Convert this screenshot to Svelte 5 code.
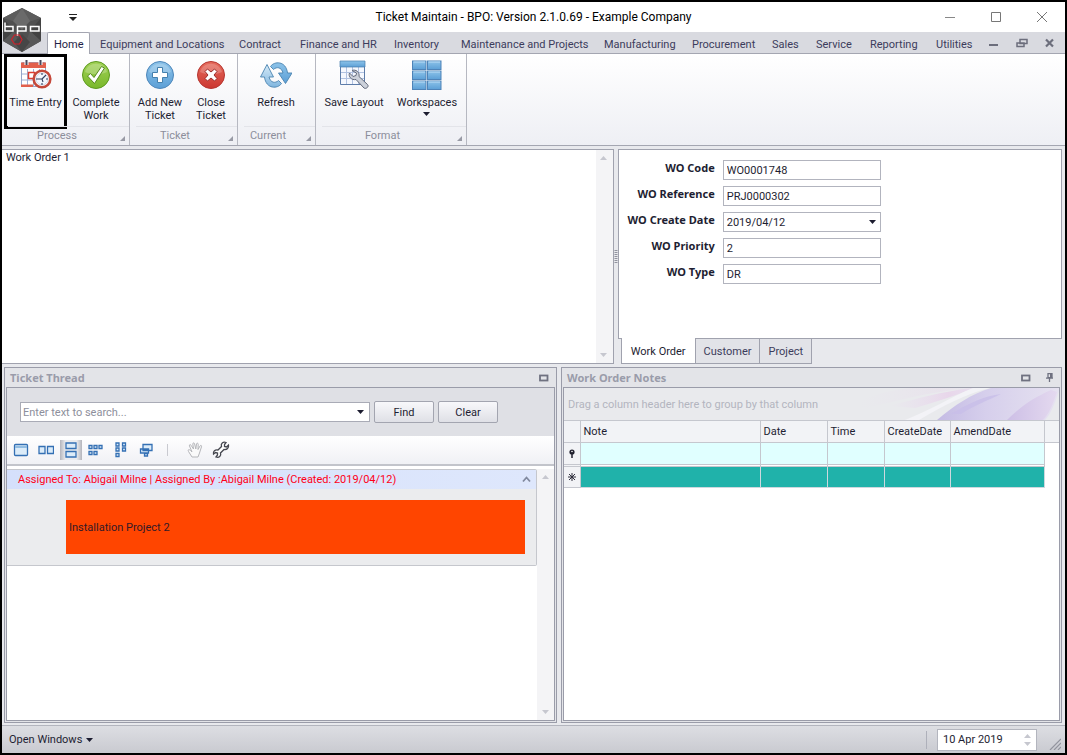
<script>
  const tabs = ['Home', 'Equipment and Locations', 'Contract', 'Finance and HR', 'Inventory', 'Maintenance and Projects', 'Manufacturing', 'Procurement', 'Sales', 'Service', 'Reporting', 'Utilities'];
  const groups = [
    { name: 'Process', kind: 'process', items: [{ label: 'Time Entry', icon: 'time', marked: true }, { label: 'Complete Work', icon: 'check' }] },
    { name: 'Ticket', kind: 'ticket', items: [{ label: 'Add New Ticket', icon: 'add' }, { label: 'Close Ticket', icon: 'close' }] },
    { name: 'Current', kind: 'current', items: [{ label: 'Refresh', icon: 'refresh' }] },
    { name: 'Format', kind: 'format', items: [{ label: 'Save Layout', icon: 'layout' }, { label: 'Workspaces', icon: 'grid', drop: true }] }
  ];
  const fields = [
    { id: 'code', label: 'WO Code', value: 'WO0001748' },
    { id: 'reference', label: 'WO Reference', value: 'PRJ0000302' },
    { id: 'created', label: 'WO Create Date', value: '2019/04/12', pick: true },
    { id: 'priority', label: 'WO Priority', value: '2' },
    { id: 'type', label: 'WO Type', value: 'DR' }
  ];
  const columns = ['Note', 'Date', 'Time', 'CreateDate', 'AmendDate'];
  const views = ['single', 'pair', 'stack', 'rows', 'cols', 'carousel'];
</script>

{#snippet caret()}
  <svg class="caret" width="8" height="4" viewBox="0 0 8 4"><path d="M0 0h7L3.5 4z" fill="#1c1c30" /></svg>
{/snippet}

{#snippet maximize()}
  <svg width="10" height="8" viewBox="0 0 10 8"><rect x="1" y="1.500" width="7.500" height="5" fill="none" stroke="#6f7180" stroke-width="1.800" /></svg>
{/snippet}

{#snippet scrollbar()}
  <div class="scroll">
    <svg width="8" height="4" viewBox="0 0 8 4"><path d="M0 4h7L3.500 0z" fill="#c6c7cf" /></svg>
    <svg width="8" height="4" viewBox="0 0 8 4"><path d="M0 0h7L3.500 4z" fill="#c6c7cf" /></svg>
  </div>
{/snippet}

{#snippet bigIcon(kind)}
  <svg width="32" height="32" viewBox="0 0 32 32">
    {#if kind === 'time'}
      <rect x="1.500" y="3.500" width="24" height="24" rx="1" fill="#fff" stroke="#93a5ca" />
      <path d="M2 15h23M2 21h23M7.500 10v17M13.500 10v17M19.500 10v17" stroke="#9fb0d4" />
      <path d="M1 3.500h25V9H1zM1 25.500h12V28H1z" fill="#e2604c" />
      <rect x="8.500" y="13.500" width="6" height="6" fill="#fff" stroke="#dc3d30" stroke-width="1.500" />
      <path d="M6.500 1v5M20.500 1v5" stroke="#fff" stroke-width="4" /><path d="M6.500 1v5M20.500 1v5" stroke="#47485c" stroke-width="2" />
      <circle cx="22" cy="20" r="8.300" fill="#fff" stroke="#c5483a" stroke-width="2.600" />
      <circle cx="22" cy="20" r="6" fill="#f3f6fd" stroke="#bec8de" stroke-width=".7" />
      <path d="M22 14v2M22 24v2M16 20h2M26 20h2M22 20l4-4M22 20h-4.500M22 20l1 3" stroke="#33405e" stroke-width="1.100" />
    {:else if kind === 'check'}
      <circle cx="16" cy="16" r="13.500" fill="url(#green)" stroke="#5c9a1e" />
      <path d="M5 13c3-11 19-11 22 0-6 3-16 3-22 0z" fill="#fff" opacity=".22" />
      <path d="M7.500 17l3-2.500 3.500 4 7.500-11 3 1.500-10 15.500z" fill="#fff" stroke="#558b1f" stroke-linejoin="round" />
    {:else if kind === 'add'}
      <circle cx="16" cy="16" r="13.500" fill="url(#blue)" stroke="#4e87ba" />
      <path d="M5 13c3-11 19-11 22 0-6 3-16 3-22 0z" fill="#fff" opacity=".22" />
      <path d="M13.500 8.500h5v5h5v5h-5v5h-5v-5h-5v-5h5z" fill="#fff" stroke="#4480ad" stroke-linejoin="round" />
    {:else if kind === 'close'}
      <circle cx="16" cy="16" r="13.500" fill="url(#red)" stroke="#b63630" />
      <path d="M5 13c3-11 19-11 22 0-6 3-16 3-22 0z" fill="#fff" opacity=".2" />
      <path d="M10 12.500L12.500 10l3.500 3 3.500-3 2.500 2.500-3 3.500 3 3.500-2.500 2.500-3.500-3-3.500 3-2.500-2.500 3-3.500z" fill="#fff" stroke="#9b2d2b" stroke-linejoin="round" />
    {:else if kind === 'refresh'}
      <path d="M10.500 7.500C14 2 26 1.500 27.500 14H32l-6.500 10.500L18.500 14h4.500C21.500 8 16.500 7.500 13.500 10.500z" fill="url(#blue)" stroke="#4b83b0" stroke-width=".9" />
      <path d="M21.500 24.500C18 30 6 30.500 4.500 18H.5L7 5.500 13.500 18H9c1.500 6 6.500 6.500 9.500 3.500z" fill="url(#paleblue)" stroke="#4b83b0" stroke-width=".9" />
    {:else if kind === 'layout'}
      <path d="M2.500 2.500h24v23h-24z" fill="#f5f8fe" stroke="#5d7ca9" />
      <path d="M3 13.500h23M3 19.500h23M8.500 8v17M14.500 8v17M20.500 8v17" stroke="#b1c2e1" />
      <path d="M2 2h25v6H2z" fill="url(#blue)" stroke="#467cae" stroke-width=".7" />
      <path d="M14 11.500c3.500-1.500 8 1.500 7 6l8.500 8c2 2-1.500 5-3.500 3.500l-8-8.500c-4.500 1-8-3-6.500-6.500l3.500 3.500 3-1 .5-2.500z" fill="#ccd1da" stroke="#62697a" stroke-linejoin="round" />
    {:else}
      {#each [2, 12, 22] as y}
        {#each [1.5, 16.5] as x}
          <rect {x} {y} width="13.500" height="8.500" fill="url(#blue)" stroke="#4e83b8" />
          <path d="M{x + 1} {y + 1}h11.500" stroke="#bcdcf5" />
        {/each}
      {/each}
    {/if}
  </svg>
{/snippet}

<svg class="defs" width="0" height="0" aria-hidden="true">
  <defs>
    <linearGradient id="green" x2="0" y2="1"><stop stop-color="#a1d156" /><stop offset="1" stop-color="#79b82b" /></linearGradient>
    <linearGradient id="blue" x2="0" y2="1"><stop stop-color="#8cc3e9" /><stop offset="1" stop-color="#5c9fd6" /></linearGradient>
    <linearGradient id="paleblue" x2="0" y2="1"><stop stop-color="#d7ebf8" /><stop offset="1" stop-color="#80b6df" /></linearGradient>
    <linearGradient id="red" x2="0" y2="1"><stop stop-color="#e66c5d" /><stop offset="1" stop-color="#cb3731" /></linearGradient>
  </defs>
</svg>

<div class="window">
  <header class="titlebar">
    <svg class="quick" width="9" height="7" viewBox="0 0 9 7"><path d="M0 .5h8" stroke="#222" /><path d="M0 3h8L4 7z" fill="#222" /></svg>
    <h1>Ticket Maintain - BPO: Version 2.1.0.69 - Example Company</h1>
    <div class="sys">
      <button aria-label="Minimize"><svg width="12" height="12" viewBox="0 0 12 12"><path d="M1 6.500h10" stroke="#888" /></svg></button>
      <button aria-label="Maximize"><svg width="12" height="12" viewBox="0 0 12 12"><path d="M1.500 1.500h9v9h-9z" fill="none" stroke="#777" /></svg></button>
      <button aria-label="Close"><svg width="12" height="12" viewBox="0 0 12 12"><path d="M1 1l10 10M11 1L1 11" stroke="#777" /></svg></button>
    </div>
  </header>

  <svg class="logo" width="42" height="46" viewBox="0 0 42 46">
    <path d="M20 1l19 10v23L20 45 1 34V11z" fill="#505050" />
    <path d="M20 1l19 10-19 6L1 11z" fill="#5c5c5c" /><path d="M20 1l8 13-8 9-9-9z" fill="#6a6a6a" />
    <path d="M1 11l11 13-11 10zM39 11L28 24l11 10z" fill="#434343" /><path d="M12 24l8 21L1 34zM28 24l-8 21 19-11z" fill="#585858" />
    <path d="M20 27l8 8-8 10-8-10z" fill="#464646" />
    <g fill="none" stroke="#fff" stroke-width="1.500">
      <path d="M3 15.500V24h8v-4.500H3M15.500 29v-9.500H24V24h-8.500M28.500 19.500H37V24h-8.500z" />
    </g>
    <path d="M9.500 32.500l3-4.500 5 0 2.500 4.500-2.500 4.500-5 0z" fill="none" stroke="#d0202a" stroke-width="1.200" />
  </svg>

  <nav class="tabs">
    {#each tabs as tab, i}
      <button class:active={i === 0}>{tab}</button>
    {/each}
    <button class="child" aria-label="Minimize ticket"><svg width="12" height="10" viewBox="0 0 12 10"><path d="M1 7h9" stroke="#6c6e7c" stroke-width="2" /></svg></button>
    <button class="child" aria-label="Restore ticket"><svg width="12" height="10" viewBox="0 0 12 10"><path d="M4 1.500h7v4H4zM1 5h7v3.500H1z" fill="#dadbe1" stroke="#6c6e7c" stroke-width="1.500" /></svg></button>
    <button class="child" aria-label="Close ticket"><svg width="12" height="10" viewBox="0 0 12 10"><path d="M2 1.500l7 7M9 1.500l-7 7" stroke="#6c6e7c" stroke-width="2.200" /></svg></button>
  </nav>

  <section class="ribbon">
    {#each groups as group}
      <div class="group {group.kind}">
        <div class="actions">
          {#each group.items as item}
            <button class={item.icon} class:marked={item.marked}>
              {@render bigIcon(item.icon)}
              <span>{item.label}</span>
              {#if item.drop}{@render caret()}{/if}
            </button>
          {/each}
        </div>
        <div class="caption">
          <span>{group.name}</span>
          <svg width="5" height="5" viewBox="0 0 5 5"><path d="M5 0v5H0z" fill="#989aa5" /></svg>
        </div>
      </div>
    {/each}
  </section>

  <main>
    <div class="upper">
      <section class="order">
        <p>Work Order 1</p>
        {@render scrollbar()}
      </section>
      <svg class="grip" width="4" height="14" viewBox="0 0 4 14"><path d="M2 0v14" stroke="#92949f" stroke-width="3" stroke-dasharray="1 1" /></svg>
      <section class="details">
        <form>
          {#each fields as field}
            <label for={field.id}>{field.label}</label>
            {#if field.pick}
              <div class="combo">
                <select id={field.id}><option>{field.value}</option></select>
                {@render caret()}
              </div>
            {:else}
              <input id={field.id} value={field.value} />
            {/if}
          {/each}
        </form>
        <div class="pages">
          <button class="active">Work Order</button>
          <button>Customer</button>
          <button>Project</button>
        </div>
      </section>
    </div>

    <div class="lower">
      <section class="panel">
        <div class="head"><h2>Ticket Thread</h2><button aria-label="Maximize thread">{@render maximize()}</button></div>
        <div class="body">
          <div class="find">
            <div class="search">
              <input aria-label="Search" placeholder="Enter text to search..." />
              <button aria-label="Recent searches">{@render caret()}</button>
            </div>
            <button class="push">Find</button>
            <button class="push">Clear</button>
          </div>
          <div class="tools">
            {#each views as view}
              <button aria-label="{view} view" class:on={view === 'stack'}>
                <svg width="16" height="16" viewBox="0 0 16 16" fill="#dcecf9" stroke="#3470b4" stroke-width="1.300">
                  {#if view === 'single'}
                    <rect x="1.500" y="2.500" width="13" height="11" rx="1" /><path d="M2 5h12" stroke="#92bde2" stroke-width="2" />
                  {:else if view === 'pair'}
                    <path d="M1 4.500h6v7H1zM9.500 4.500h6v7h-6z" />
                  {:else if view === 'stack'}
                    <path d="M3 1h10v5.500H3zM3 9.500h10V15H3z" />
                  {:else if view === 'rows'}
                    <path d="M1 3.500h3v3H1zM6 3.500h3v3H6zM11 3.500h3v3h-3zM1 9.500h3v3H1zM6 9.500h3v3H6z" />
                  {:else if view === 'cols'}
                    <path d="M3 1h3v3H3zM9.500 1h3v3h-3zM3 6h3v3H3zM9.500 6h3v3h-3zM3 11.500h3v3H3z" />
                  {:else}
                    <path d="M5 2.500h9v6H5zM2.500 7h8v4h-8zM6.500 11.500h3v2.500h-3z" />
                  {/if}
                </svg>
              </button>
            {/each}
            <i></i>
            <button aria-label="Pan" class="pan"><svg width="18" height="18" viewBox="0 0 18 18" fill="#fafafa" stroke="#b5b6ba"><path d="M6 16L2.500 10.500c-1-2 .5-2.500 2-1L6 11 3.500 5c-.5-1.500 1-2 1.700-.5L7.500 8 6.800 3c0-1.500 1.500-1.500 1.800 0L9.800 8l.7-5c.3-1.300 1.700-1 1.700.3L12 8.500l2-3.500c.7-1.200 2-.5 1.500.8L13.500 12 12 16z" /></svg></button>
            <button aria-label="Customize"><svg width="18" height="18" viewBox="0 0 18 18" fill="#fff" stroke="#45474f" stroke-width="1.300"><path d="M14 1.500c-3-1-5.500 1-4.500 4L6 9c-3-.5-5 1-4.500 4l2-1.500 2 .5v2l-1.500 2c3 1 5.500-1 4.500-4L12 8.500c3 .5 5-1.500 4.500-4.500l-2 2-2-.5v-2z" /></svg></button>
          </div>
          <div class="thread">
            <article>
              <header>
                <span>Assigned To: Abigail Milne | Assigned By :Abigail Milne (Created: 2019/04/12)</span>
                <svg width="9" height="7" viewBox="0 0 9 7"><path d="M1 5.500l3.500-4 3.500 4" fill="none" stroke="#81899e" stroke-width="1.800" /></svg>
              </header>
              <div class="job">Installation Project 2</div>
            </article>
            {@render scrollbar()}
          </div>
        </div>
      </section>

      <section class="panel">
        <div class="head">
          <h2>Work Order Notes</h2>
          <button aria-label="Maximize notes">{@render maximize()}</button>
          <button aria-label="Pin notes"><svg width="9" height="9" viewBox="0 0 9 9"><path d="M3 .7h4v4H3zM1 5.200h7M4.500 5v4" fill="none" stroke="#6f7180" stroke-width="1.300" /><path d="M6 0v5" stroke="#6f7180" stroke-width="2" /></svg></button>
        </div>
        <div class="body">
          <div class="drag">
            <span>Drag a column header here to group by that column</span>
            <svg width="200" height="32" viewBox="0 0 200 32">
              <defs>
                <linearGradient id="pinkish"><stop stop-color="#e9def0" stop-opacity="0" /><stop offset=".7" stop-color="#e8d4ea" /><stop offset="1" stop-color="#e8e0f0" /></linearGradient>
                <linearGradient id="violet"><stop stop-color="#c4bbe4" /><stop offset=".4" stop-color="#d6cfec" /><stop offset="1" stop-color="#e6e2f0" /></linearGradient>
                <linearGradient id="edge"><stop stop-color="#cdbfe6" /><stop offset="1" stop-color="#e4d9ef" /></linearGradient>
              </defs>
              <path d="M0 22C40 12 70 4 112 0h-60C30 2 14 8 0 12z" fill="url(#pinkish)" opacity=".3" />
              <path d="M30 18C60 10 82 4 112 0h3C96 8 76 14 56 20z" fill="url(#pinkish)" opacity=".9" />
              <path d="M60 32C84 18 108 5 131 0h-17C94 8 70 23 46 32z" fill="#f3f3f7" />
              <path d="M78 32c18-15 34-26 54-32h68v3c-5 15-9 24-14 29z" fill="url(#violet)" />
              <path d="M92 26c20-12 34-18 50-20-12 6-28 12-40 20z" fill="#c8bee8" opacity=".8" />
              <path d="M148 32c14-14 28-23 44-30l6 2c-4 12-8 22-14 28z" fill="url(#edge)" />
            </svg>
          </div>
          <table>
            <colgroup><col class="c0" /><col class="c1" /><col class="c2" /><col class="c3" /><col class="c4" /><col class="c5" /><col class="c6" /></colgroup>
            <thead><tr><th></th>{#each columns as column}<th>{column}</th>{/each}<th></th></tr></thead>
            <tbody>
              <tr class="filter"><td><svg width="8" height="9" viewBox="0 0 8 9"><circle cx="4" cy="3" r="2.600" fill="#20202e" /><circle cx="4" cy="2.500" r=".8" fill="#fff" /><path d="M4 4v5" stroke="#20202e" stroke-width="1.500" /></svg></td>{#each columns as _}<td></td>{/each}<td></td></tr>
              <tr class="gap"><td></td>{#each columns as _}<td></td>{/each}<td></td></tr>
              <tr class="fresh"><td><svg width="8" height="8" viewBox="0 0 8 8"><path d="M4 0v8M0 4h8M1 1l6 6M7 1L1 7" stroke="#30303e" stroke-width="1" /></svg></td>{#each columns as _}<td></td>{/each}<td></td></tr>
            </tbody>
          </table>
        </div>
      </section>
    </div>
  </main>

  <footer>
    <button class="open">Open Windows {@render caret()}</button>
    <i></i>
    <div class="date">
      <input aria-label="Date" value="10 Apr 2019" />
      {@render scrollbar()}
    </div>
    <svg width="12" height="12" viewBox="0 0 12 12"><path d="M1 12L12 1M5 12l7-7M9 12l3-3" stroke="#92949e" stroke-width="1.200" /></svg>
  </footer>
</div>

<style>
  :global(body) { margin: 0; }
  * { box-sizing: border-box; }
  .defs { position: absolute; }
  svg { display: block; flex: none; }
  .window {
    position: relative;
    display: flex;
    flex-direction: column;
    min-height: 100vh;
    border: 2px solid #000;
    background: #e8e9ed;
    color: #1e1e32;
    font: 11px/13px Tahoma, Roboto, sans-serif;
  }
  button, input, select { font: inherit; color: inherit; }
  button { padding: 0; border: 0; background: none; white-space: nowrap; }
  input, select { min-width: 0; border-radius: 0; outline: 0; }
  h1, h2, p { margin: 0; }

  .titlebar { display: grid; grid-template-columns: 1fr auto 1fr; align-items: center; height: 30px; background: #fff; }
  .quick { margin-left: 67px; }
  h1 { font: 12px/16px "Segoe UI", Roboto, sans-serif; color: #000; }
  .sys { display: flex; justify-content: flex-end; gap: 34px; padding-right: 17px; }
  .logo { position: absolute; left: 0; top: 5px; z-index: 2; }

  .tabs {
    display: grid;
    grid-template-columns: 43fr 139fr 61fr 94fr 67fr 143fr 88fr 80fr 44fr 54fr 66fr 52fr 28fr 28fr 24fr;
    height: 22px;
    padding: 0 7px 0 45px;
    background: #d9dae0;
    border-bottom: 1px solid #a4a6b1;
  }
  .tabs button { padding: 2px 0 0 10px; text-align: left; color: #3c3c5c; }
  .tabs .child { padding-top: 0; }
  .tabs .active { height: 22px; padding-left: 6px; background: #fff; border: 1px solid #a4a6b1; border-bottom: 0; border-radius: 2px 2px 0 0; color: #1e1e46; }

  .ribbon { display: flex; height: 92px; border-bottom: 1px solid #a4a6b1; background: linear-gradient(#fff, #eeeff4); }
  .group { display: flex; flex-direction: column; border-right: 1px solid #b6b8c1; }
  .process { width: 128px; }
  .ticket { width: 108px; }
  .current { width: 78px; }
  .format { width: 151px; }
  .actions { display: flex; flex: 1; min-height: 0; padding-left: 2px; }
  .actions button { display: flex; flex-direction: column; align-items: center; width: 56px; padding-top: 5px; }
  .actions .marked { width: 63px; height: 75px; padding-top: 2px; border: 3px solid #000; }
  .actions .check { width: 58px; }
  .actions .close { width: 46px; }
  .actions .refresh, .actions .layout { width: 72px; }
  .actions .grid { width: 74px; }
  .actions span { margin-top: 5px; white-space: normal; }
  .actions .marked span, .actions .layout span, .actions .grid span { white-space: nowrap; }
  .grid :global(.caret) { margin-top: 3px; }
  .caption { display: flex; height: 19px; margin-left: 6px; padding: 2px 4px 0 0; border-top: 1px solid #e3e4e9; color: #8c8e9b; }
  .caption span { flex: 1; padding-right: 14px; text-align: center; }
  .caption svg { align-self: flex-end; margin-bottom: 4px; }

  main { display: flex; flex: 1; flex-direction: column; gap: 3px; padding: 3px 3px 2px 0; }
  .upper { display: flex; flex: 215 1 0px; }
  .order { display: flex; flex: 609; min-height: 215px; background: #fff; border: 1px solid #a0a2ae; border-width: 1px 1px 1px 0; }
  .order p { flex: 1; padding: 1px 4px; }
  .scroll { display: flex; flex-direction: column; justify-content: space-between; align-items: center; width: 17px; padding: 6px 0; background: #f4f4f6; }
  .grip { align-self: center; }
  .details { display: flex; flex: 443; flex-direction: column; }
  form {
    display: grid;
    flex: 1;
    grid-template-columns: 96px 158px;
    grid-auto-rows: 20px;
    gap: 6px 8px;
    padding: 10px 0;
    background: #fff;
    border: 1px solid #a0a2ae;
  }
  form label { padding-top: 1px; text-align: right; font-family: Tahoma, "Noto Sans", sans-serif; font-weight: 700; white-space: nowrap; }
  form input, form select { width: 100%; height: 20px; padding: 0 3px; background: #fff; border: 1px solid #b2b4be; }
  form select { appearance: none; }
  .combo { position: relative; }
  .combo :global(.caret) { position: absolute; right: 4px; top: 8px; }
  .pages { display: flex; align-items: flex-start; padding-left: 3px; }
  .pages button { height: 25px; margin-left: -1px; padding: 0 8px; background: #e2e3e8; border: 1px solid #a0a2ae; border-top: 0; color: #3c3c5c; }
  .pages .active { height: 26px; margin: -1px 0 0; padding: 2px 9px 0; background: #fff; color: #1e1e32; }

  .lower { display: grid; flex: 358 1 0px; grid-template-columns: 553fr 501fr; gap: 4px; padding-left: 2px; }
  .panel { display: flex; flex-direction: column; min-width: 0; padding: 0 1px 1px; border: 1px solid #9a9ca9; background: #e3e4e8; }
  .head { display: flex; align-items: center; gap: 14px; height: 19px; padding: 0 6px 0 4px; }
  h2 { flex: 1; font: 700 11px/13px Tahoma, "Noto Sans", sans-serif; color: #9a9caa; }
  .body { display: flex; flex: 1; flex-direction: column; border: 1px solid #9a9ca9; background: #fff; }
  .find { display: flex; align-items: center; gap: 4px; height: 48px; padding: 0 13px; background: #dfe0e5; }
  .search { display: flex; flex: 0 1 350px; height: 20px; border: 1px solid #a9abb6; background: #fff; }
  .search input { flex: 1; padding: 0 2px; border: 0; }
  .search button { padding: 0 4px; }
  .search input::placeholder { color: #8d8f9c; opacity: 1; }
  .push { width: 60px; height: 22px; border: 1px solid #a3a5b0; border-radius: 2px; background: linear-gradient(#f8f8fb, #dfe0e6); }
  .tools { display: flex; align-items: center; gap: 3px; height: 30px; padding-left: 3px; border-bottom: 2px solid #c2c4cb; background: linear-gradient(#fff, #f0f1f5); }
  .tools button { padding: 2px 3px; }
  .tools .on { background: linear-gradient(90deg, #b4b5bc, #eaebee 25%, #eaebee 75%, #b4b5bc); }
  .tools i { width: 1px; height: 12px; margin: 0 13px 0 7px; background: #c9cad0; }
  .tools .pan { padding: 2px; }
  .thread { display: flex; flex: 1; padding-top: 3px; }
  article { flex: 1; align-self: flex-start; padding-bottom: 11px; background: #ebecee; border: 1px solid #c5c7cd; border-left: 0; border-radius: 0 2px 2px 0; }
  article header { display: flex; align-items: center; justify-content: space-between; height: 19px; padding: 0 5px 0 11px; background: linear-gradient(90deg, #d5e0fb, #dee7fc); color: #ff0018; }
  .job { display: flex; align-items: center; height: 54px; margin: 11px 11px 0 59px; padding: 0 3px; background: #ff4500; color: #331a28; }

  .drag { display: flex; align-items: center; justify-content: space-between; height: 32px; padding-left: 4px; background: #e9eaed; color: #b3b5bf; overflow: hidden; }
  table { width: 100%; border-collapse: collapse; table-layout: fixed; }
  .c0 { width: 16px; }
  .c2 { width: 67px; }
  .c3 { width: 57px; }
  .c4 { width: 66px; }
  .c5 { width: 94px; }
  .c6 { width: 15px; }
  th { height: 22px; padding: 0 3px; background: #f2f3f6; border: 1px solid #c5c7ce; border-left: 0; text-align: left; font-weight: 400; }
  th:last-child { border-right: 0; }
  td { height: 22px; padding: 0; border: 1px solid #c5c7ce; border-width: 0 1px 1px 0; }
  td svg { margin: auto; }
  td:first-child { background: #f2f3f6; }
  .filter td:not(:first-child) { background: #e0ffff; }
  .gap td { height: 2px; line-height: 0; }
  .fresh td { height: 21px; }
  .fresh td:not(:first-child) { background: #20b2aa; border-color: #cdd8de; }
  tbody tr td:last-child:last-child { background: #fff; border: 0; }

  footer { display: flex; align-items: center; height: 28px; padding: 0 4px 0 7px; border-top: 1px solid #b3b5be; background: linear-gradient(#dddee3, #c9cad0); }
  .open { display: flex; align-items: center; gap: 4px; margin-right: auto; }
  footer i { width: 1px; height: 18px; margin-right: 10px; background: #aeb0ba; }
  .date { display: flex; width: 100px; height: 22px; margin-right: 12px; background: #fff; border: 1px solid #b3b5be; }
  .date input { flex: 1; padding: 0 5px; border: 0; }
  .date :global(.scroll) { width: 16px; padding: 4px 0; background: #fff; }
  footer > svg { align-self: flex-end; margin-bottom: 3px; }
</style>
